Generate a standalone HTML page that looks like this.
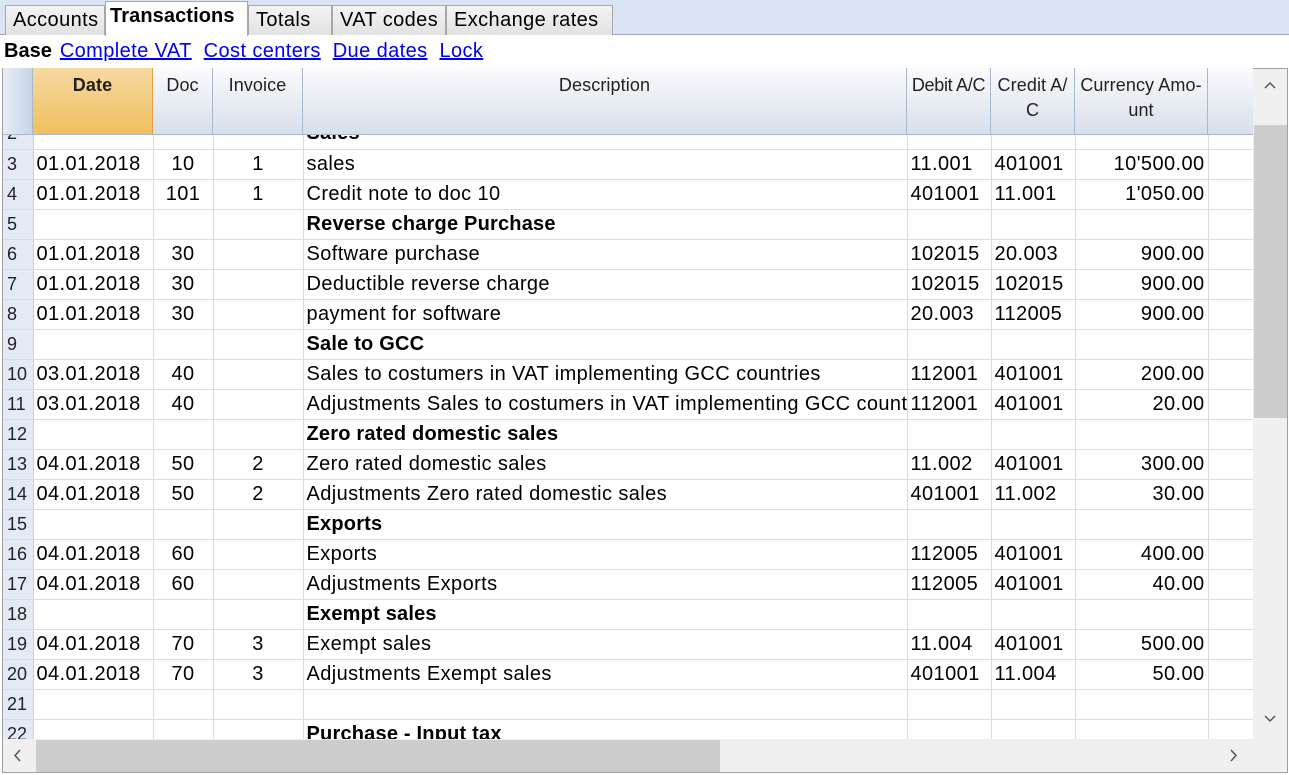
<!DOCTYPE html>
<html><head><style>
*{margin:0;padding:0;box-sizing:border-box}
body{width:1289px;height:775px;background:#fff;font-family:"Liberation Sans",sans-serif;position:relative;overflow:hidden;color:#000}
.tabbar{position:absolute;left:0;top:0;width:1289px;height:35px;background:#dae4f4;border-bottom:1px solid #a0a8b8}
.tab{position:absolute;top:5px;height:30px;border:1px solid #a8a8a8;border-bottom:none;background:linear-gradient(#f4f4f4,#e2e2e2);font-size:20px;letter-spacing:0.4px;line-height:28px;padding-left:7px;white-space:nowrap;overflow:hidden}
.tab.act{top:1px;height:35px;background:#fff;font-weight:bold;z-index:2;padding-left:4px;letter-spacing:0.1px}
.sub{position:absolute;top:40px;left:4px;font-size:20px;white-space:nowrap;letter-spacing:0.4px}
.sub b{margin-right:8px;letter-spacing:0}
.sub a{color:#0000ee;text-decoration:underline;margin-right:6px}
.frame{position:absolute;left:2px;top:68px;width:1286px;height:705px;border:1px solid #a0a0a0}
.hdr{position:absolute;top:68px;height:67px;background:linear-gradient(#fafbfd,#d8dfea);border-right:1px solid #a8b8cc;border-bottom:1px solid #a8b8cc;font-size:18px;letter-spacing:0.1px;text-align:center;padding-top:5px;line-height:25px;color:#222;white-space:nowrap;overflow:hidden}
.grid{position:absolute;left:3px;top:135px;width:1250px;height:604px;overflow:hidden}
table{position:absolute;left:0;top:-16px;width:1250px;border-collapse:collapse;table-layout:fixed;font-size:20px;letter-spacing:0.4px}
td{height:30px;border-right:1px solid #dcdcdc;border-bottom:1px solid #dcdcdc;white-space:nowrap;overflow:hidden;padding:0 3px;line-height:29px}
td.n{background:#e3eaf5;font-size:18px;letter-spacing:0;padding:0 0 0 4px;color:#222;border-right:1px solid #c8d0dc}
.c{text-align:center}.r{text-align:right}
.b{font-weight:bold;letter-spacing:0.2px}
.vs{position:absolute;left:1253px;top:69px;width:34px;height:670px;background:#f0f0f0}
.hs{position:absolute;left:3px;top:739px;width:1284px;height:33px;background:#f0f0f0}
</style></head><body>
<div class="tabbar"></div>
<div class="tab" style="left:5px;width:100px">Accounts</div>
<div class="tab act" style="left:105px;width:143px">Transactions</div>
<div class="tab" style="left:248px;width:84px">Totals</div>
<div class="tab" style="left:332px;width:114px">VAT codes</div>
<div class="tab" style="left:446px;width:167px">Exchange rates</div>
<div class="sub"><b>Base</b><a>Complete VAT</a> <a>Cost centers</a> <a>Due dates</a> <a>Lock</a></div>
<div class="frame"></div>
<div class="hdr" style="left:3px;width:30px;background:linear-gradient(90deg,#e8eef8,#c8d4e6)"></div>
<div class="hdr" style="left:33px;width:120px;background:linear-gradient(#f7d9a0,#f0c060);border-right:1px solid #e8a040;font-weight:bold">Date</div>
<div class="hdr" style="left:153px;width:60px">Doc</div>
<div class="hdr" style="left:213px;width:90px">Invoice</div>
<div class="hdr" style="left:303px;width:604px">Description</div>
<div class="hdr" style="left:907px;width:84px;letter-spacing:-0.3px">Debit A/C</div>
<div class="hdr" style="left:991px;width:84px">Credit A/<br>C</div>
<div class="hdr" style="left:1075px;width:133px">Currency Amo-<br>unt</div>
<div class="hdr" style="left:1208px;width:45px;border-right:none"></div>
<div class="grid"><table>
<colgroup><col style="width:30px"><col style="width:120px"><col style="width:60px"><col style="width:90px"><col style="width:604px"><col style="width:84px"><col style="width:84px"><col style="width:133px"><col style="width:45px"></colgroup>
<tr><td class="n">2</td><td></td><td></td><td></td><td class="b">Sales</td><td></td><td></td><td></td><td></td></tr>
<tr><td class="n">3</td><td>01.01.2018</td><td class="c">10</td><td class="c">1</td><td>sales</td><td>11.001</td><td>401001</td><td class="r">10'500.00</td><td></td></tr>
<tr><td class="n">4</td><td>01.01.2018</td><td class="c">101</td><td class="c">1</td><td>Credit note to doc 10</td><td>401001</td><td>11.001</td><td class="r">1'050.00</td><td></td></tr>
<tr><td class="n">5</td><td></td><td></td><td></td><td class="b">Reverse charge Purchase</td><td></td><td></td><td></td><td></td></tr>
<tr><td class="n">6</td><td>01.01.2018</td><td class="c">30</td><td></td><td>Software purchase</td><td>102015</td><td>20.003</td><td class="r">900.00</td><td></td></tr>
<tr><td class="n">7</td><td>01.01.2018</td><td class="c">30</td><td></td><td>Deductible reverse charge</td><td>102015</td><td>102015</td><td class="r">900.00</td><td></td></tr>
<tr><td class="n">8</td><td>01.01.2018</td><td class="c">30</td><td></td><td>payment for software</td><td>20.003</td><td>112005</td><td class="r">900.00</td><td></td></tr>
<tr><td class="n">9</td><td></td><td></td><td></td><td class="b">Sale to GCC</td><td></td><td></td><td></td><td></td></tr>
<tr><td class="n">10</td><td>03.01.2018</td><td class="c">40</td><td></td><td>Sales to costumers in VAT implementing GCC countries</td><td>112001</td><td>401001</td><td class="r">200.00</td><td></td></tr>
<tr><td class="n">11</td><td>03.01.2018</td><td class="c">40</td><td></td><td style="padding-right:0">Adjustments Sales to costumers in VAT implementing GCC countries</td><td>112001</td><td>401001</td><td class="r">20.00</td><td></td></tr>
<tr><td class="n">12</td><td></td><td></td><td></td><td class="b">Zero rated domestic sales</td><td></td><td></td><td></td><td></td></tr>
<tr><td class="n">13</td><td>04.01.2018</td><td class="c">50</td><td class="c">2</td><td>Zero rated domestic sales</td><td>11.002</td><td>401001</td><td class="r">300.00</td><td></td></tr>
<tr><td class="n">14</td><td>04.01.2018</td><td class="c">50</td><td class="c">2</td><td>Adjustments Zero rated domestic sales</td><td>401001</td><td>11.002</td><td class="r">30.00</td><td></td></tr>
<tr><td class="n">15</td><td></td><td></td><td></td><td class="b">Exports</td><td></td><td></td><td></td><td></td></tr>
<tr><td class="n">16</td><td>04.01.2018</td><td class="c">60</td><td></td><td>Exports</td><td>112005</td><td>401001</td><td class="r">400.00</td><td></td></tr>
<tr><td class="n">17</td><td>04.01.2018</td><td class="c">60</td><td></td><td>Adjustments Exports</td><td>112005</td><td>401001</td><td class="r">40.00</td><td></td></tr>
<tr><td class="n">18</td><td></td><td></td><td></td><td class="b">Exempt sales</td><td></td><td></td><td></td><td></td></tr>
<tr><td class="n">19</td><td>04.01.2018</td><td class="c">70</td><td class="c">3</td><td>Exempt sales</td><td>11.004</td><td>401001</td><td class="r">500.00</td><td></td></tr>
<tr><td class="n">20</td><td>04.01.2018</td><td class="c">70</td><td class="c">3</td><td>Adjustments Exempt sales</td><td>401001</td><td>11.004</td><td class="r">50.00</td><td></td></tr>
<tr><td class="n">21</td><td></td><td></td><td></td><td></td><td></td><td></td><td></td><td></td></tr>
<tr><td class="n">22</td><td></td><td></td><td></td><td class="b">Purchase - Input tax</td><td></td><td></td><td></td><td></td></tr>
</table></div>
<div class="vs">
<svg style="position:absolute;left:11px;top:12px" width="12" height="8"><path d="M1 7 L6 2 L11 7" stroke="#555" stroke-width="1.5" fill="none"/></svg>
<div style="position:absolute;left:1px;top:56px;width:33px;height:293px;background:#cdcdcd"></div>
<svg style="position:absolute;left:11px;top:646px" width="12" height="8"><path d="M1 1 L6 6 L11 1" stroke="#555" stroke-width="1.5" fill="none"/></svg>
</div>
<div class="hs">
<svg style="position:absolute;left:10px;top:10px" width="8" height="13"><path d="M7 1 L2 6.5 L7 12" stroke="#555" stroke-width="1.5" fill="none"/></svg>
<div style="position:absolute;left:33px;top:1px;width:684px;height:32px;background:#cdcdcd"></div>
<svg style="position:absolute;left:1227px;top:10px" width="8" height="13"><path d="M1 1 L6 6.5 L1 12" stroke="#555" stroke-width="1.5" fill="none"/></svg>
</div>
</body></html>
